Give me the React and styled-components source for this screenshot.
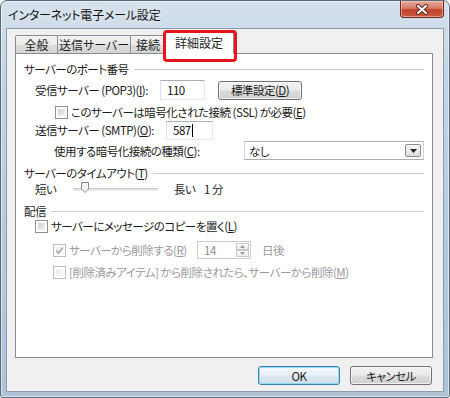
import React from 'react';
import styled, {createGlobalStyle, css} from 'styled-components';

const GlobalStyle = createGlobalStyle`
  html, body {
    margin: 0;
    padding: 0;
    background: #ffffff;
  }
  body {
    font-family: "Noto Sans CJK JP", "Noto Sans", sans-serif;
    font-feature-settings: "palt";
    font-size: 11.5px;
    letter-spacing: -0.5px;
    color: #1b1b1b;
  }
`;

const Window = styled.div`
  width: 450px;
  height: 398px;
  box-sizing: border-box;
  display: flex;
  flex-direction: column;
  border: 1px solid #5b6878;
  border-radius: 7px 7px 3px 3px;
  background: linear-gradient(180deg, #d5e1ec 0%, #c3d4e4 18%, #b7cadd 60%, #aec3d8 100%);
  box-shadow: inset 0 0 0 1px rgba(255, 255, 255, 0.55);
  overflow: hidden;
`;

const TitleBar = styled.div`
  height: 27px;
  display: flex;
  align-items: flex-start;
  padding-left: 7px;
`;

const Title = styled.div`
  margin-top: 5px;
  font-size: 12px;
  letter-spacing: -0.2px;
  color: #111;
  text-shadow: 0 0 6px rgba(255, 255, 255, 0.9);
`;

const CloseButton = styled.div`
  margin-left: auto;
  margin-right: 5px;
  width: 44px;
  height: 17px;
  box-sizing: border-box;
  border: 1px solid #6b2b22;
  border-top: none;
  border-radius: 0 0 4px 4px;
  background: linear-gradient(180deg, #e9a99a 0%, #d77a68 45%, #c2422f 55%, #cc5a42 100%);
  box-shadow: inset 0 0 0 1px rgba(255, 220, 210, 0.5);
  display: flex;
  align-items: center;
  justify-content: center;
`;

const Client = styled.div`
  flex: 1;
  margin: 0 5px 5px 5px;
  border: 1px solid #8d9cac;
  background: #f0f0f0;
  display: flex;
  flex-direction: column;
  padding: 3px 10px 0 8px;
`;

const TabRow = styled.div`
  display: flex;
  align-items: flex-end;
  height: 21px;
  position: relative;
  z-index: 1;
`;

const Tab = styled.div`
  box-sizing: border-box;
  height: 18px;
  width: ${p => p.w}px;
  border: 1px solid #898c95;
  border-bottom: none;
  margin-left: ${p => (p.first ? 0 : -1)}px;
  background: linear-gradient(180deg, #f3f3f3 0%, #ebebeb 50%, #dddddd 51%, #d4d4d4 100%);
  display: flex;
  align-items: center;
  justify-content: center;
  font-size: 12px;
  letter-spacing: 0;
  border-radius: 2px 2px 0 0;
  ${p => p.active && css`
    height: 22px;
    margin-bottom: -1px;
    background: #ffffff;
    position: relative;
    margin-left: -2px;
    padding-bottom: 2px;
  `}
`;

const Highlight = styled.div`
  position: absolute;
  top: -3px;
  left: -2px;
  right: -4px;
  bottom: -8px;
  border: 3px solid #e8131b;
  border-radius: 4px;
  pointer-events: none;
`;

const Panel = styled.div`
  height: 305px;
  box-sizing: border-box;
  border: 1px solid #898c95;
  background: #ffffff;
  padding: 8px 8px 0 8px;
  display: flex;
  flex-direction: column;
`;

const GroupHeader = styled.div`
  height: 14px;
  margin-top: ${p => p.mt || 0}px;
  display: flex;
  align-items: center;
  gap: 5px;
  &::after {
    content: "";
    flex: 1;
    height: 1px;
    background: #c9ced4;
    margin-top: 1px;
  }
`;

const Row = styled.div`
  display: flex;
  align-items: center;
  height: ${p => p.h || 14}px;
  margin-top: ${p => p.mt || 0}px;
  margin-left: ${p => p.ml || 0}px;
  color: ${p => (p.disabled ? '#9a9a9a' : 'inherit')};
`;

const Label = styled.div`
  width: ${p => p.w}px;
  flex-shrink: 0;
  white-space: nowrap;
`;

const TextBox = styled.div`
  box-sizing: border-box;
  width: ${p => p.w}px;
  height: ${p => p.h || 20}px;
  border: 1px solid #abadb3;
  border-left-color: #dbdfe6;
  border-right-color: #e3e9ef;
  border-bottom-color: #e3e9ef;
  background: #fff;
  display: flex;
  align-items: center;
  padding-left: 6px;
  color: ${p => (p.disabled ? '#8a8a8a' : '#111')};
`;

const Caret = styled.span`
  display: inline-block;
  width: 1px;
  height: 13px;
  background: #000;
  margin-left: 1px;
`;

const Button = styled.div`
  box-sizing: border-box;
  width: ${p => p.w}px;
  height: ${p => p.h || 19}px;
  margin-left: ${p => p.ml || 0}px;
  border: 1px solid #707070;
  border-radius: 3px;
  background: linear-gradient(180deg, #f2f2f2 0%, #ebebeb 48%, #dddddd 52%, #cfcfcf 100%);
  box-shadow: inset 0 0 0 1px rgba(255, 255, 255, 0.7);
  display: flex;
  align-items: center;
  justify-content: center;
  ${p => p.primary && css`
    border-color: #3c7fb1;
    box-shadow: inset 0 0 0 1px #8fdcf9;
    background: linear-gradient(180deg, #f4f8fb 0%, #eaf1f6 48%, #dce7ef 52%, #d1dfe9 100%);
  `}
`;

const Box = styled.div`
  box-sizing: border-box;
  width: 13px;
  height: 13px;
  flex-shrink: 0;
  margin-left: ${p => p.ml || 0}px;
  margin-right: 3px;
  border: 1px solid ${p => (p.disabled ? '#bcbcbc' : '#8e8f8f')};
  background: #fff;
  padding: 2px;
  position: relative;
  &::before {
    content: "";
    display: block;
    width: 100%;
    height: 100%;
    background: ${p => (p.disabled
      ? 'linear-gradient(135deg, #ececec, #f7f7f7)'
      : 'linear-gradient(135deg, #cfcfcf, #f4f4f4)')};
  }
`;

const Check = styled.svg`
  position: absolute;
  left: 1px;
  top: 1px;
`;

const Select = styled.div`
  box-sizing: border-box;
  width: 180px;
  height: 19px;
  border: 1px solid #abadb3;
  border-left-color: #d2d6dd;
  border-right-color: #d2d6dd;
  background: #fff;
  display: flex;
  align-items: center;
  padding: 0 2px 0 4px;
`;

const DropButton = styled.div`
  margin-left: auto;
  width: 16px;
  height: 13px;
  box-sizing: border-box;
  border: 1px solid #8e8f8f;
  border-radius: 2px;
  background: linear-gradient(180deg, #f6f6f6, #dcdcdc);
  display: flex;
  align-items: center;
  justify-content: center;
`;

const Track = styled.div`
  width: 85px;
  height: 3px;
  margin: 0 16px 0 3px;
  border-top: 1px solid #c9c9c9;
  border-bottom: 1px solid #e6e6e6;
  background: #e8e8e8;
  position: relative;
  box-sizing: border-box;
`;

const Thumb = styled.svg`
  position: absolute;
  left: 8px;
  top: -7px;
`;

const Spinner = styled.div`
  box-sizing: border-box;
  width: 54px;
  height: 18px;
  border: 1px solid #c9ccd1;
  background: #fff;
  display: flex;
  align-items: center;
  padding-left: 6px;
  color: #8a8a8a;
`;

const SpinButtons = styled.div`
  margin-left: auto;
  margin-right: 1px;
  width: 13px;
  height: 14px;
  display: flex;
  flex-direction: column;
`;

const SpinPart = styled.div`
  flex: 1;
  box-sizing: border-box;
  border: 1px solid #c9c9c9;
  background: linear-gradient(180deg, #fafafa, #ececec);
  display: flex;
  align-items: center;
  justify-content: center;
`;

const Suffix = styled.span`
  margin-left: 11px;
`;

const Footer = styled.div`
  display: flex;
  justify-content: flex-end;
  gap: 10px;
  margin-top: 8px;
  padding-right: 1px;
`;

function CheckBox({checked, disabled, ml}) {
  return (
    <Box disabled={disabled} ml={ml}>
      {checked && (
        <Check width="9" height="9" viewBox="0 0 9 9">
          <path d="M1 4.5 L3.5 7 L8 1.5" fill="none" stroke={disabled ? '#a8a8a8' : '#2a4e8a'} strokeWidth="1.6"/>
        </Check>
      )}
    </Box>
  );
}

export default function App() {
  return (
    <>
      <GlobalStyle/>
      <Window>
        <TitleBar>
          <Title>インターネット電子メール設定</Title>
          <CloseButton>
            <svg width="14" height="11" viewBox="0 0 14 11">
              <path d="M3 2 L11 9 M11 2 L3 9" stroke="#5a2119" strokeWidth="4" strokeLinecap="round"/>
              <path d="M3 2 L11 9 M11 2 L3 9" stroke="#ffffff" strokeWidth="2.2" strokeLinecap="round"/>
            </svg>
          </CloseButton>
        </TitleBar>
        <Client>
          <TabRow>
            <Tab w={43} first>全般</Tab>
            <Tab w={74}>送信サーバー</Tab>
            <Tab w={36}>接続</Tab>
            <Tab w={70} active>
              詳細設定
              <Highlight/>
            </Tab>
          </TabRow>
          <Panel>
            <GroupHeader><span>サーバーのポート番号</span></GroupHeader>
            <Row h={20} mt={4} ml={11}>
              <Label w={125}>受信サーバー (POP3)(<u>I</u>):</Label>
              <TextBox w={45}>110</TextBox>
              <Button w={84} ml={13}><span>標準設定(<u>D</u>)</span></Button>
            </Row>
            <Row mt={5} ml={31}>
              <CheckBox/>
              <span>このサーバーは暗号化された接続 (SSL) が必要(<u>E</u>)</span>
            </Row>
            <Row h={20} mt={1} ml={11}>
              <Label w={131}>送信サーバー (SMTP)(<u>O</u>):</Label>
              <TextBox w={47} h={19}>587<Caret/></TextBox>
            </Row>
            <Row h={19} mt={1} ml={30}>
              <Label w={190}>使用する暗号化接続の種類(<u>C</u>):</Label>
              <Select>
                なし
                <DropButton>
                  <svg width="7" height="4" viewBox="0 0 7 4">
                    <path d="M0 0 L7 0 L3.5 4 Z" fill="#222"/>
                  </svg>
                </DropButton>
              </Select>
            </Row>
            <GroupHeader mt={6}><span>サーバーのタイムアウト(<u>T</u>)</span></GroupHeader>
            <Row mt={2} ml={11}>
              <Label w={35}>短い</Label>
              <Track>
                <Thumb width="8" height="11" viewBox="0 0 8 11">
                  <path d="M0.5 0.5 H7.5 V7 L4 10.5 L0.5 7 Z" fill="#f1f1f1" stroke="#8c8c8c"/>
                </Thumb>
              </Track>
              <Label w={30}>長い</Label>
              <span>1 分</span>
            </Row>
            <GroupHeader mt={8}><span>配信</span></GroupHeader>
            <Row mt={1} ml={11}>
              <CheckBox/>
              <span>サーバーにメッセージのコピーを置く(<u>L</u>)</span>
            </Row>
            <Row h={18} mt={8} ml={29} disabled>
              <CheckBox checked disabled/>
              <Label w={128}>サーバーから削除する(<u>R</u>)</Label>
              <Spinner>
                14
                <SpinButtons>
                  <SpinPart>
                    <svg width="5" height="3" viewBox="0 0 5 3"><path d="M0 3 L2.5 0 L5 3 Z" fill="#9a9a9a"/></svg>
                  </SpinPart>
                  <SpinPart>
                    <svg width="5" height="3" viewBox="0 0 5 3"><path d="M0 0 L5 0 L2.5 3 Z" fill="#9a9a9a"/></svg>
                  </SpinPart>
                </SpinButtons>
              </Spinner>
              <Suffix>日後</Suffix>
            </Row>
            <Row mt={6} ml={29} disabled>
              <CheckBox disabled/>
              <span>[削除済みアイテム] から削除されたら、サーバーから削除(<u>M</u>)</span>
            </Row>
          </Panel>
          <Footer>
            <Button w={82} primary>OK</Button>
            <Button w={82}>キャンセル</Button>
          </Footer>
        </Client>
      </Window>
    </>
  );
}
